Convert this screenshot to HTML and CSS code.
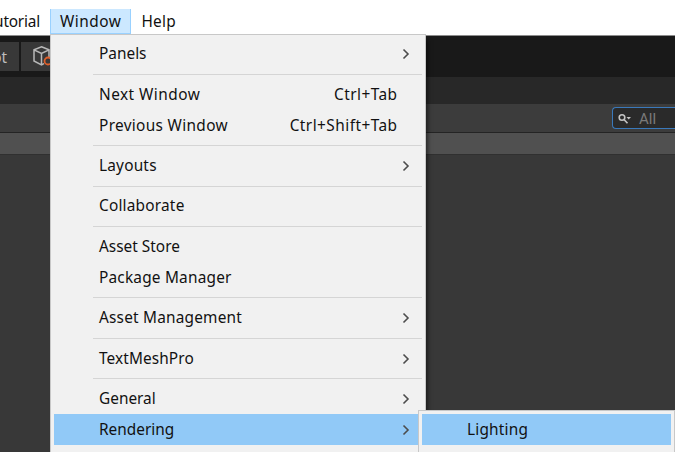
FILE: index.html
```
<!DOCTYPE html>
<html lang="en">
<head>
<meta charset="utf-8">
<title>Editor</title>
<link rel="stylesheet" href="styles.css">
</head>
<body>
<div class="editor">
  <nav class="menubar">
    <span class="menubar-item clipped">utorial</span>
    <span class="menubar-item active">Window</span>
    <span class="menubar-item help">Help</span>
  </nav>
  <div class="toolbar">
    <span class="tool script">ot</span>
    <span class="tool cube">
      <svg width="24" height="24" viewBox="0 0 24 24" fill="none" stroke="#b8b8b8" stroke-width="1.5"><path d="M9.500 1.800 17 4.800v11l-7.500 4L2 16V4.800zM2 4.800l7.500 3.700L17 4.800M9.500 8.500V20"/><circle cx="16" cy="16.500" r="4.500" fill="#383838" stroke="none"/><circle cx="16" cy="16" r="3.500" stroke="#e0602c" stroke-width="1.800"/></svg>
    </span>
  </div>
  <div class="tabs"></div>
  <div class="filter">
    <div class="search">
      <svg width="14" height="12" viewBox="0 0 14 12" fill="none" stroke="#c4c4c4" stroke-width="1.600"><circle cx="4" cy="4.500" r="2.800"/><path d="M6 6.500l3.500 3.800"/><path d="M8.500 4h4.500L10.700 6.500z" fill="#c4c4c4" stroke="none"/></svg>
      <span>All</span>
    </div>
  </div>
  <div class="heading"></div>
  <div class="content"></div>

  <div class="menu main">
    <div class="item"><span>Panels</span><svg class="arrow" viewBox="0 0 8 12"><path d="M1.500 1.500 6 6l-4.500 4.500"/></svg></div>
    <hr>
    <div class="item"><span class="widest">Next Window</span><span class="widest">Ctrl+Tab</span></div>
    <div class="item"><span class="wider">Previous Window</span><span class="widest">Ctrl+Shift+Tab</span></div>
    <hr>
    <div class="item"><span class="wide">Layouts</span><svg class="arrow" viewBox="0 0 8 12"><path d="M1.500 1.500 6 6l-4.500 4.500"/></svg></div>
    <hr>
    <div class="item"><span class="wide">Collaborate</span></div>
    <hr>
    <div class="item"><span>Asset Store</span></div>
    <div class="item"><span class="wide">Package Manager</span></div>
    <hr>
    <div class="item"><span class="wide">Asset Management</span><svg class="arrow" viewBox="0 0 8 12"><path d="M1.500 1.500 6 6l-4.500 4.500"/></svg></div>
    <hr>
    <div class="item"><span class="slight">TextMeshPro</span><svg class="arrow" viewBox="0 0 8 12"><path d="M1.500 1.500 6 6l-4.500 4.500"/></svg></div>
    <hr>
    <div class="item"><span>General</span><svg class="arrow" viewBox="0 0 8 12"><path d="M1.500 1.500 6 6l-4.500 4.500"/></svg></div>
    <div class="item selected"><span>Rendering</span><svg class="arrow" viewBox="0 0 8 12"><path d="M1.500 1.500 6 6l-4.500 4.500"/></svg></div>
  </div>
  <div class="menu submenu">
    <div class="item selected"><span class="wide">Lighting</span></div>
  </div>
</div>
</body>
</html>
```
FILE: styles.css
```
* { box-sizing: border-box; }
body {
  margin: 0;
  background: #fff;
  overflow: hidden;
  font: 15.4px/20px "Noto Sans", "Open Sans", sans-serif;
  color: #111;
}
.editor {
  position: relative;
  width: 675px;
  height: 452px;
  overflow: hidden;
  display: flex;
  flex-direction: column;
}
.menubar {
  height: 36px;
  flex: none;
  padding-top: 9px;
  display: flex;
  border-bottom: 1px solid #8c8c8c;
}
.menubar-item { height: 25px; line-height: 25px; white-space: nowrap; }
.clipped { width: 50px; padding-right: 10px; display: flex; justify-content: flex-end; letter-spacing: -0.2px; }
.active { width: 81px; padding-left: 9px; letter-spacing: 0.5px; background: #cce8ff; border: 1px solid #99d1ff; border-top: 0; }
.help { padding-left: 10.5px; letter-spacing: 0.2px; }
.toolbar {
  height: 41px;
  flex: none;
  display: flex;
  gap: 2px;
  padding-top: 6px;
  background: #191919;
}
.tool { height: 29px; background: #383838; color: #bdbdbd; }
.script { width: 19px; padding-right: 12px; display: flex; justify-content: flex-end; line-height: 31px; }
.cube { width: 60px; padding: 3px 0 0 11px; }
.tabs { height: 27px; flex: none; background: #282828; }
.filter {
  height: 29px;
  flex: none;
  background: #3c3c3c;
  border-bottom: 1px solid #242424;
  padding-top: 3px;
  display: flex;
  justify-content: flex-end;
}
.search {
  width: 63px;
  height: 22px;
  border: 1.5px solid #3a79bb;
  border-right: 0;
  border-radius: 4px 0 0 4px;
  background: #2a2a2a;
  display: flex;
  align-items: center;
  padding: 1px 0 0 5px;
  gap: 7px;
  color: #7a7a7a;
  font: 15px/20px Roboto, sans-serif;
}
.heading { height: 22px; flex: none; background: #505050; border-bottom: 1px solid #303030; }
.content { flex: 1; background: #383838; }
.menu {
  position: absolute;
  background: #f1f1f1;
  border: 1px solid #c8c8c8;
}
.main {
  left: 50px;
  top: 34px;
  width: 376px;
  height: 440px;
  padding: 4px 3px;
  box-shadow: 4px 4px 4px -2px rgba(0, 0, 0, .5);
}
.submenu { left: 418px; top: 410px; width: 257px; height: 60px; padding: 3px; }
.item {
  height: 30.700px;
  display: flex;
  align-items: center;
  justify-content: space-between;
  padding: 0 24.500px 0 45px;
  white-space: nowrap;
}
.submenu .item { padding-top: 1px; }
.item .arrow { width: 8px; height: 12px; margin-right: -12.500px; fill: none; stroke: #4c4c4c; stroke-width: 1.600; }
.slight { letter-spacing: 0.1px; }
.wide { letter-spacing: 0.2px; }
.wider { letter-spacing: 0.32px; }
.widest { letter-spacing: 0.46px; }
.selected { background: #91c9f7; }
.main .selected { margin-right: -3px; padding-right: 27.500px; }
hr { height: 1px; margin: 4.400px 0 4.400px 39px; border: 0; background: #d5d5d5; }
```
